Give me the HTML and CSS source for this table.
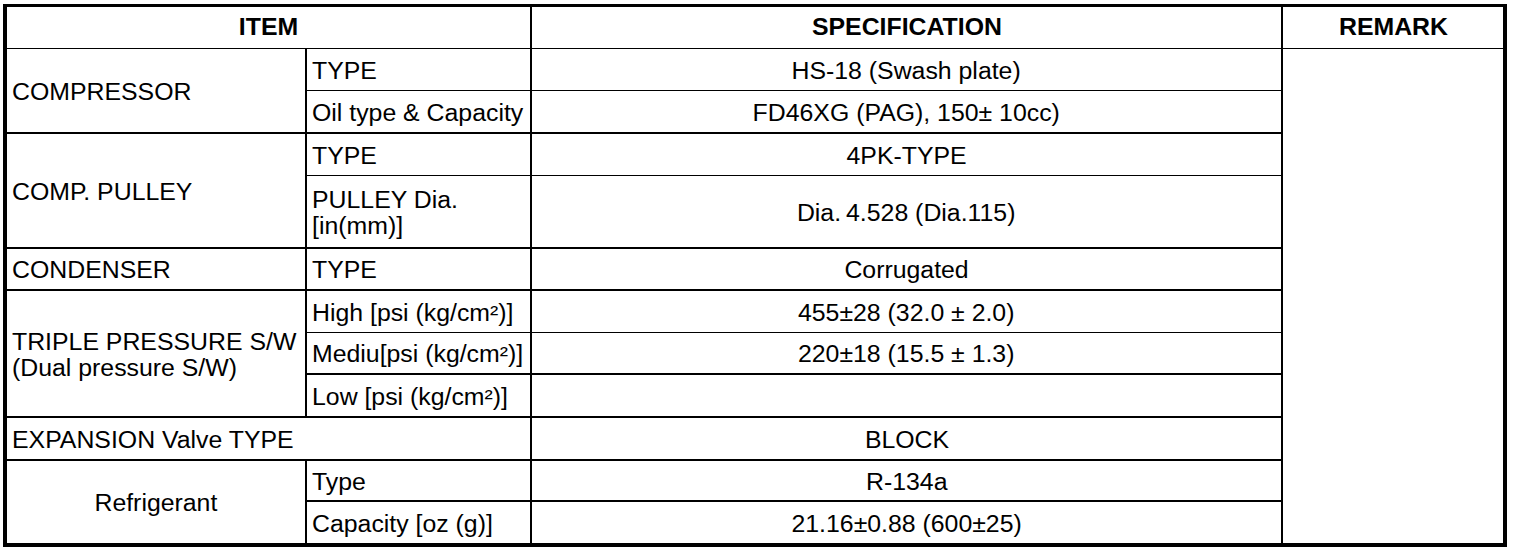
FILE: index.html
```html
<!DOCTYPE html>
<html>
<head>
<meta charset="utf-8">
<link rel="stylesheet" href="styles.css">
</head>
<body>
<div class="page">
  <div class="spec-table">
    <div class="c h span2"><span class="t tc">ITEM</span></div>
    <div class="c h"><span class="t tc">SPECIFICATION</span></div>
    <div class="c h last"><span class="t tc">REMARK</span></div>

    <div class="c r2 b2"><span class="t">COMPRESSOR</span></div>
    <div class="c b1"><span class="t">TYPE</span></div>
    <div class="c ctr b1"><span class="t tc">HS-18 (Swash plate)</span></div>
    <div class="c last remark"></div>

    <div class="c b2"><span class="t">Oil type &amp; Capacity</span></div>
    <div class="c ctr b2"><span class="t tc">FD46XG (PAG), 150&plusmn; 10cc)</span></div>

    <div class="c r2 b2"><span class="t">COMP. PULLEY</span></div>
    <div class="c b1"><span class="t">TYPE</span></div>
    <div class="c ctr b1"><span class="t tc">4PK-TYPE</span></div>

    <div class="c b2"><span class="t">PULLEY Dia.<br>[in(mm)]</span></div>
    <div class="c ctr b2"><span class="t tc">Dia.&thinsp;4.528 (Dia.115)</span></div>

    <div class="c b2"><span class="t">CONDENSER</span></div>
    <div class="c b2"><span class="t">TYPE</span></div>
    <div class="c ctr b2"><span class="t tc">Corrugated</span></div>

    <div class="c r3 b2"><span class="t">TRIPLE PRESSURE S/W<br>(Dual pressure S/W)</span></div>
    <div class="c b1"><span class="t">High [psi (kg/cm&sup2;)]</span></div>
    <div class="c ctr b1"><span class="t tc">455&plusmn;28 (32.0 &plusmn; 2.0)</span></div>

    <div class="c b2"><span class="t">Mediu[psi (kg/cm&sup2;)]</span></div>
    <div class="c ctr b2"><span class="t tc">220&plusmn;18 (15.5 &plusmn; 1.3)</span></div>

    <div class="c b2"><span class="t">Low [psi (kg/cm&sup2;)]</span></div>
    <div class="c ctr b2"></div>

    <div class="c span2 b2"><span class="t">EXPANSION Valve TYPE</span></div>
    <div class="c ctr b2"><span class="t tc">BLOCK</span></div>

    <div class="c r2 ctr"><span class="t tc">Refrigerant</span></div>
    <div class="c b2"><span class="t">Type</span></div>
    <div class="c ctr b2"><span class="t tc">R-134a</span></div>

    <div class="c"><span class="t">Capacity [oz (g)]</span></div>
    <div class="c ctr"><span class="t tc">21.16&plusmn;0.88 (600&plusmn;25)</span></div>
  </div>
</div>
</body>
</html>
```

FILE: styles.css
```css
html, body {
  margin: 0;
  padding: 0;
  background: #fff;
}

.page {
  padding: 4px 0 0 3px;
}

.spec-table {
  width: 1496px;
  border-style: solid;
  border-color: #000;
  border-width: 3px 4px 4px 4px;
  display: grid;
  grid-template-columns: 300px 225px 751px 220px;
  grid-template-rows: 42px 42px 43px 42px 73px 42px 42px 42px 43px 43px 41px 41px;
  font-family: "Liberation Sans", Arial, sans-serif;
  font-size: 23px;
  color: #000;
  line-height: 1.15;
}

.c {
  box-sizing: border-box;
  border-right: 2px solid #000;
  display: flex;
  align-items: center;
  padding: 3px 0 0 5px;
  min-width: 0;
  overflow: hidden;
}

.c.last {
  border-right: none;
}

.c.h {
  justify-content: center;
  padding: 0;
  font-weight: bold;
  border-bottom: 1px solid #000;
}

.c.ctr {
  justify-content: center;
  padding-left: 0;
}

.span2 {
  grid-column: span 2;
}

.r2 {
  grid-row: span 2;
}

.r3 {
  grid-row: span 3;
}

.remark {
  grid-row: span 11;
}

.b1 {
  border-bottom: 1px solid #000;
}

.b2 {
  border-bottom: 2px solid #000;
}

.t {
  display: inline-block;
  white-space: nowrap;
  transform: scaleX(1.08);
  transform-origin: left center;
}

.t.tc {
  transform-origin: center center;
  text-align: center;
}
```
